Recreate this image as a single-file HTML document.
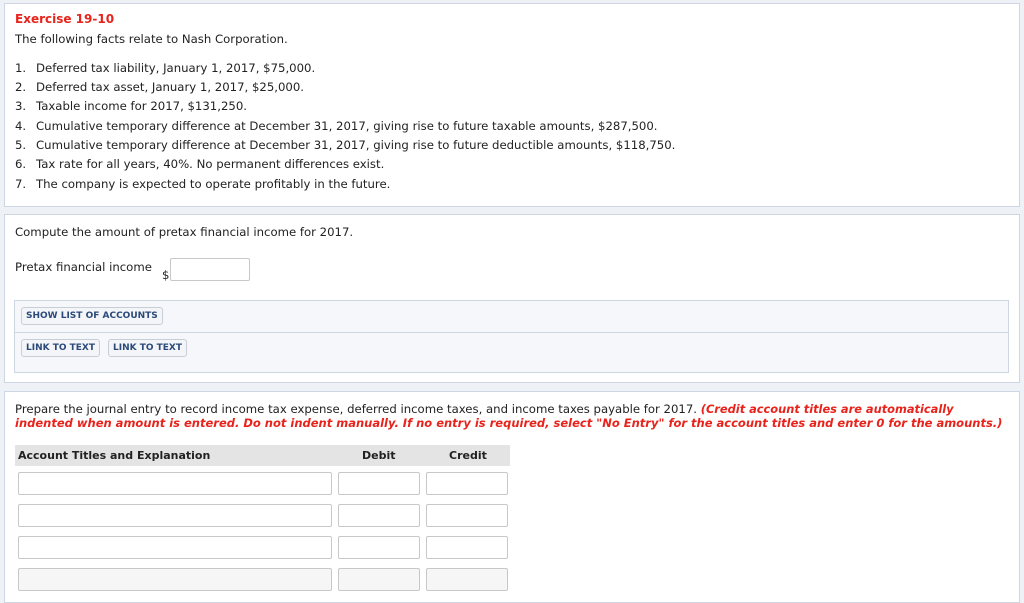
<!DOCTYPE html>
<html><head><style>
body{margin:0;width:1024px;height:595px;background:#eef1f5;font-family:"DejaVu Sans","Liberation Sans",sans-serif;font-size:11.7px;color:#222;position:relative;overflow:hidden}
.p{position:absolute;background:#fff;border:1px solid #cdd6e2}
.t{position:absolute;white-space:nowrap}
.red{color:#e8231c;font-weight:bold}
.n{display:inline-block;width:21px}
.inp{position:absolute;background:#fff;border:1px solid #c8c8c8;border-radius:2px}
.btn{position:absolute;border:1px solid #c8ced6;border-radius:3px;background:#f3f5f8;color:#2b4a7a;font-weight:bold;font-size:9px;height:16px;line-height:16px;padding:0 4px}
</style></head><body>
<div class="p" style="left:4px;top:3px;width:1014px;height:202px"></div>
<div class="t red" style="left:15px;top:12px;font-size:12px">Exercise 19-10</div>
<div class="t" style="left:15px;top:32px">The following facts relate to Nash Corporation.</div>
<div class="t" style="left:15px;top:61px"><span class="n">1.</span>Deferred tax liability, January 1, 2017, $75,000.</div>
<div class="t" style="left:15px;top:80px"><span class="n">2.</span>Deferred tax asset, January 1, 2017, $25,000.</div>
<div class="t" style="left:15px;top:99px"><span class="n">3.</span>Taxable income for 2017, $131,250.</div>
<div class="t" style="left:15px;top:119px"><span class="n">4.</span>Cumulative temporary difference at December 31, 2017, giving rise to future taxable amounts, $287,500.</div>
<div class="t" style="left:15px;top:138px"><span class="n">5.</span>Cumulative temporary difference at December 31, 2017, giving rise to future deductible amounts, $118,750.</div>
<div class="t" style="left:15px;top:157px"><span class="n">6.</span>Tax rate for all years, 40%. No permanent differences exist.</div>
<div class="t" style="left:15px;top:177px"><span class="n">7.</span>The company is expected to operate profitably in the future.</div>

<div class="p" style="left:4px;top:214px;width:1014px;height:167px"></div>
<div class="t" style="left:15px;top:225px">Compute the amount of pretax financial income for 2017.</div>
<div class="t" style="left:15px;top:260px">Pretax financial income</div>
<div class="t" style="left:162px;top:268px">$</div>
<div class="inp" style="left:170px;top:258px;width:78px;height:21px"></div>
<div style="position:absolute;left:14px;top:300px;width:993px;height:71px;background:#f5f7fa;border:1px solid #cdd6e2"></div>
<div style="position:absolute;left:15px;top:332px;width:993px;height:1px;background:#cdd6e2"></div>
<div class="btn" style="left:21px;top:307px">SHOW LIST OF ACCOUNTS</div>
<div class="btn" style="left:21px;top:339px">LINK TO TEXT</div>
<div class="btn" style="left:108px;top:339px">LINK TO TEXT</div>

<div class="p" style="left:4px;top:391px;width:1014px;height:210px"></div>
<div class="t" style="left:15px;top:402px">Prepare the journal entry to record income tax expense, deferred income taxes, and income taxes payable for 2017. <i class="red" style="font-size:11.4px">(Credit account titles are automatically</i></div>
<div class="t red" style="left:15px;top:416px;font-style:italic;font-size:11.5px">indented when amount is entered. Do not indent manually. If no entry is required, select "No Entry" for the account titles and enter 0 for the amounts.)</div>
<div style="position:absolute;left:15px;top:445px;width:495px;height:21px;background:#e4e4e4"></div>
<div class="t" style="left:18px;top:449px;font-weight:bold;font-size:11px">Account Titles and Explanation</div>
<div class="t" style="left:362px;top:449px;font-weight:bold;font-size:11px">Debit</div>
<div class="t" style="left:449px;top:449px;font-weight:bold;font-size:11px">Credit</div>
<div class="inp" style="left:18px;top:472px;width:312px;height:21px"></div>
<div class="inp" style="left:338px;top:472px;width:80px;height:21px"></div>
<div class="inp" style="left:426px;top:472px;width:80px;height:21px"></div>
<div class="inp" style="left:18px;top:504px;width:312px;height:21px"></div>
<div class="inp" style="left:338px;top:504px;width:80px;height:21px"></div>
<div class="inp" style="left:426px;top:504px;width:80px;height:21px"></div>
<div class="inp" style="left:18px;top:536px;width:312px;height:21px"></div>
<div class="inp" style="left:338px;top:536px;width:80px;height:21px"></div>
<div class="inp" style="left:426px;top:536px;width:80px;height:21px"></div>
<div class="inp" style="left:18px;top:568px;width:312px;height:21px;background:#f6f6f6"></div>
<div class="inp" style="left:338px;top:568px;width:80px;height:21px;background:#f6f6f6"></div>
<div class="inp" style="left:426px;top:568px;width:80px;height:21px;background:#f6f6f6"></div>
</body></html>
